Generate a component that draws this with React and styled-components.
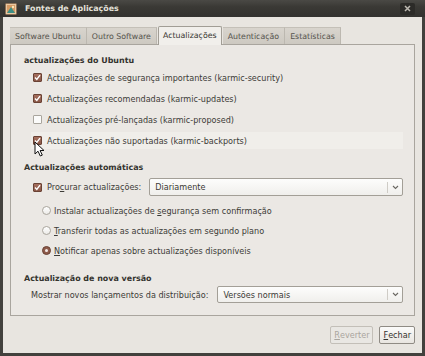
import React from "react";
import styled, { createGlobalStyle, css } from "styled-components";

const GlobalStyle = createGlobalStyle`
  html, body {
    margin: 0;
    padding: 0;
  }
  body {
    width: 425px;
    height: 356px;
    overflow: hidden;
    font-family: "DejaVu Sans", "Liberation Sans", sans-serif;
    font-size: 8.1px;
    color: #3c3b37;
  }
`;

const Window = styled.div`
  position: relative;
  width: 425px;
  height: 356px;
  display: flex;
  flex-direction: column;
  background: #e8e5e0;
`;

const TitleBar = styled.div`
  height: 17px;
  flex: none;
  display: flex;
  align-items: center;
  padding: 0 6px 0 5px;
  background: linear-gradient(#4a4945, #3a3935 40%, #33322f);
  color: #e4e1da;
  font-weight: bold;
  font-size: 7.9px;
`;

const TitleText = styled.span`
  margin-left: 8px;
  flex: 1;
`;

const CloseButton = styled.div`
  width: 15px;
  height: 12px;
  display: flex;
  align-items: center;
  justify-content: center;
  border-radius: 2px;
  background: #2c2b28;
  margin-right: 4px;
`;

const Body = styled.div`
  flex: 1;
  display: flex;
  flex-direction: column;
  padding: 9px 7px 9px 7px;
  border: 3px solid #42413d;
  border-top: 0;
`;

const TabBar = styled.div`
  height: 19px;
  display: flex;
  align-items: flex-end;
  margin-bottom: -1px;
  position: relative;
  z-index: 1;
  font-size: 7.85px;
`;

const Tab = styled.div`
  display: flex;
  align-items: center;
  box-sizing: border-box;
  white-space: nowrap;
  ${(p) =>
    p.$active
      ? css`
          height: 19px;
          padding: 0 4px 1px;
          margin: 0 1px 0 1px;
          background: #f1efeb;
          border: 1px solid #a19d95;
          border-bottom: 0;
          border-radius: 2px 2px 0 0;
          color: #35342f;
        `
      : css`
          height: 17px;
          padding: 0 5px;
          margin-bottom: 1px;
          background: linear-gradient(#d8d4cd, #cdc9c1);
          border-right: 1px solid #bcb8b0;
          border-top: 1px solid #c4c0b8;
          color: #55534d;
        `}
`;

const Panel = styled.div`
  flex: 1;
  display: flex;
  flex-direction: column;
  border: 1px solid #a9a59e;
  background: #ebe8e4;
  padding: 10px 11px 12px 13px;
`;

const Heading = styled.div`
  font-weight: bold;
  font-size: 7.95px;
  line-height: 12px;
  height: 12px;
  margin-top: ${(p) => p.$mt || 0}px;
  color: #35342f;
`;

const Rows = styled.div`
  display: flex;
  flex-direction: column;
  gap: ${(p) => p.$gap}px;
  margin-top: ${(p) => p.$mt || 0}px;
`;

const Row = styled.div`
  display: flex;
  align-items: center;
  height: ${(p) => p.$h || 17}px;
  margin-left: ${(p) => p.$indent}px;
  padding-left: 2px;
  white-space: nowrap;
  ${(p) =>
    p.$hover &&
    css`
      background: #f0eeea;
    `}
`;

const Check = styled.span`
  width: 9px;
  height: 9px;
  box-sizing: border-box;
  flex: none;
  margin-right: 5px;
  border-radius: 1px;
  display: flex;
  align-items: center;
  justify-content: center;
  ${(p) =>
    p.$on
      ? css`
          background: linear-gradient(#a6705f, #8a5747);
          border: 1px solid #6a4234;
        `
      : css`
          background: #fbfbfa;
          border: 1px solid #a9a59d;
        `}
`;

const Radio = styled.span`
  width: 9px;
  height: 9px;
  box-sizing: border-box;
  flex: none;
  margin-right: 3px;
  border-radius: 50%;
  display: flex;
  align-items: center;
  justify-content: center;
  ${(p) =>
    p.$on
      ? css`
          background: #8e5b4b;
          border: 1px solid #6a4234;
          &::after {
            content: "";
            width: 3px;
            height: 3px;
            border-radius: 50%;
            background: #f4ece8;
          }
        `
      : css`
          background: linear-gradient(#ffffff, #ecebe8);
          border: 1px solid #aaa69e;
        `}
`;

const Label = styled.span`
  margin-right: ${(p) => p.$mr || 0}px;
`;

const U = styled.span`
  text-decoration: underline;
`;

const Combo = styled.div`
  display: flex;
  align-items: center;
  box-sizing: border-box;
  height: ${(p) => p.$h}px;
  flex: 1;
  border: 1px solid #a39f97;
  border-radius: 2px;
  background: linear-gradient(#fdfdfc, #f0efec);
  color: #3a3934;
`;

const ComboText = styled.span`
  flex: 1;
  padding-left: 5px;
`;

const ComboArrow = styled.span`
  width: 14px;
  height: 11px;
  border-left: 1px solid #cfccc6;
  display: flex;
  align-items: center;
  justify-content: center;
`;

const ButtonRow = styled.div`
  display: flex;
  justify-content: flex-end;
  gap: 6px;
  margin-top: 10px;
`;

const Button = styled.div`
  height: 18px;
  box-sizing: border-box;
  display: flex;
  align-items: center;
  padding: 0 3px;
  border-radius: 2px;
  ${(p) =>
    p.$disabled
      ? css`
          border: 1px solid #c3bfb8;
          background: #e9e7e3;
          color: #a9a59e;
        `
      : css`
          border: 1px solid #8f8b84;
          background: linear-gradient(#fbfbfa, #e8e5e0);
          color: #33322e;
        `}
`;

const Cursor = styled.svg`
  position: absolute;
  left: 34px;
  top: 141px;
  pointer-events: none;
`;

const Tick = () => (
  <svg width="7" height="7" viewBox="0 0 7 7">
    <path d="M1 3.6 L2.8 5.5 L6 1.2" fill="none" stroke="#fff" strokeWidth="1.4" />
  </svg>
);

const Chevron = () => (
  <svg width="7" height="5" viewBox="0 0 7 5">
    <path d="M1 1 L3.5 3.5 L6 1" fill="none" stroke="#6a6862" strokeWidth="1.1" />
  </svg>
);

const AppIcon = () => (
  <svg width="12" height="12" viewBox="0 0 12 12">
    <rect x="0.5" y="0.5" width="11" height="11" rx="1" fill="#e9c9a3" stroke="#8a6f55" />
    <rect x="2" y="2" width="8" height="8" fill="#d59a64" />
    <path d="M2 10 L6 4 L10 10 Z" fill="#3d8f86" />
    <circle cx="8" cy="4" r="1.2" fill="#fbe6b8" />
  </svg>
);

const CloseIcon = () => (
  <svg width="7" height="7" viewBox="0 0 7 7">
    <path d="M1 1 L6 6 M6 1 L1 6" stroke="#bdb9b1" strokeWidth="1.5" />
  </svg>
);

const CheckItem = ({ on, hover, children }) => (
  <Row $indent={7} $hover={hover}>
    <Check $on={on}>{on && <Tick />}</Check>
    <Label>{children}</Label>
  </Row>
);

const RadioItem = ({ on, children }) => (
  <Row $indent={16}>
    <Radio $on={on} />
    <Label>{children}</Label>
  </Row>
);

const tabs = ["Software Ubuntu", "Outro Software", "Actualizações", "Autenticação", "Estatísticas"];

export default function App() {
  return (
    <Window>
      <GlobalStyle />
      <TitleBar>
        <AppIcon />
        <TitleText>Fontes de Aplicações</TitleText>
        <CloseButton>
          <CloseIcon />
        </CloseButton>
      </TitleBar>
      <Body>
        <TabBar>
          {tabs.map((t, i) => (
            <Tab key={t} $active={i === 2}>
              {t}
            </Tab>
          ))}
        </TabBar>
        <Panel>
          <Heading>actualizações do Ubuntu</Heading>
          <Rows $gap={4} $mt={2}>
            <CheckItem on>Actualizações de segurança importantes (karmic-security)</CheckItem>
            <CheckItem on>Actualizações recomendadas (karmic-updates)</CheckItem>
            <CheckItem>Actualizações pré-lançadas (karmic-proposed)</CheckItem>
            <CheckItem on hover>
              Actualizações não suportadas (karmic-backports)
            </CheckItem>
          </Rows>

          <Heading $mt={13}>Actualizações automáticas</Heading>
          <Rows $gap={3} $mt={4}>
            <Row $indent={7} $h={18}>
              <Check $on>
                <Tick />
              </Check>
              <Label $mr={8}>
                Pro<U>c</U>urar actualizações:
              </Label>
              <Combo $h={18}>
                <ComboText>Diariamente</ComboText>
                <ComboArrow>
                  <Chevron />
                </ComboArrow>
              </Combo>
            </Row>
          </Rows>
          <Rows $gap={3} $mt={6}>
            <RadioItem>
              Instalar actualizações de <U>s</U>egurança sem confirmação
            </RadioItem>
            <RadioItem>
              <U>T</U>ransferir todas as actualizações em segundo plano
            </RadioItem>
            <RadioItem on>
              <U>N</U>otificar apenas sobre actualizações disponíveis
            </RadioItem>
          </Rows>

          <Heading $mt={14}>Actualização de nova versão</Heading>
          <Rows $gap={0} $mt={1}>
            <Row $indent={5} $h={17}>
              <Label $mr={9}>Mostrar novos lançamentos da distribuição:</Label>
              <Combo $h={17}>
                <ComboText>Versões normais</ComboText>
                <ComboArrow>
                  <Chevron />
                </ComboArrow>
              </Combo>
            </Row>
          </Rows>
        </Panel>
        <ButtonRow>
          <Button $disabled>
            <U>R</U>everter
          </Button>
          <Button>
            <U>F</U>echar
          </Button>
        </ButtonRow>
      </Body>
      <Cursor width="12" height="17" viewBox="0 0 12 17">
        <path d="M1 1 L1 13 L4 10.2 L6.3 15 L8.3 14.1 L6.1 9.5 L10 9.5 Z" fill="#fff" stroke="#111" strokeWidth="1" strokeLinejoin="round" />
      </Cursor>
    </Window>
  );
}
